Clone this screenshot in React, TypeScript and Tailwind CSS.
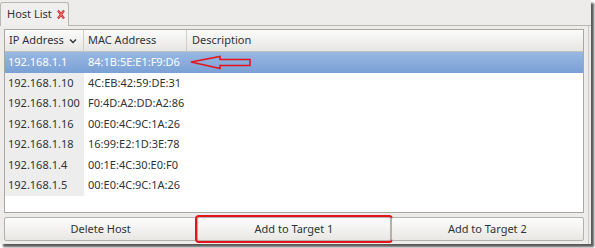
import React from "react";

const hosts = [
  { ip: "192.168.1.1", mac: "84:1B:5E:E1:F9:D6" },
  { ip: "192.168.1.10", mac: "4C:EB:42:59:DE:31" },
  { ip: "192.168.1.100", mac: "F0:4D:A2:DD:A2:86" },
  { ip: "192.168.1.16", mac: "00:E0:4C:9C:1A:26" },
  { ip: "192.168.1.18", mac: "16:99:E2:1D:3E:78" },
  { ip: "192.168.1.4", mac: "00:1E:4C:30:E0:F0" },
  { ip: "192.168.1.5", mac: "00:E0:4C:9C:1A:26" },
];

function CloseIcon() {
  return (
    <svg width="8" height="11" viewBox="0 0 8 11" className="ml-[5px]">
      <path d="M1 1.5 L7 9.5 M7 1.5 L1 9.5" stroke="#d42a2a" strokeWidth="2.2" />
      <path d="M1 1.5 L7 9.5 M7 1.5 L1 9.5" stroke="#f7a3a3" strokeWidth="0.6" />
    </svg>
  );
}

function Arrow() {
  return (
    <svg width="64" height="16" viewBox="0 0 64 16" className="absolute left-[188px] top-[54px]">
      <polygon
        points="3,8 32,2.5 32,5.5 62,5.5 62,11.5 32,11.5 32,14.5"
        fill="none"
        stroke="#e8141b"
        strokeWidth="1.6"
        strokeLinejoin="miter"
      />
    </svg>
  );
}

export default function App() {
  return (
    <div
      className="w-[595px] h-[248px] bg-white relative text-[11px] text-[#2e3436]"
      style={{ fontFamily: '"Noto Sans", "DejaVu Sans", sans-serif' }}
    >
      <div className="w-[591px] h-[244px] bg-[#edeceb] shadow-[3px_3px_2px_rgba(0,0,0,0.65)] flex flex-col">
        <div className="flex h-[26px] items-end">
          <div className="h-[24px] w-[69px] bg-[#f0efee] border border-b-0 border-[#b9b7b2] rounded-t-[3px] flex items-center pl-[6px]">
            <span>Host List</span>
            <CloseIcon />
          </div>
          <div className="flex-1 border-b border-[#b9b7b2]" />
        </div>
        <div className="flex-1 flex flex-col px-[4px] pt-[3px] pb-[2px] border-r border-[#c9c7c2] mr-[2px]">
          <div className="h-[184px] border border-[#a9a7a2] bg-white flex flex-col">
            <div className="h-[22px] flex border-b border-[#c2c0bb] bg-gradient-to-b from-[#fbfbfa] to-[#e7e6e3]">
              <div className="w-[79px] flex items-center justify-between pl-[4px] pr-[6px] border-r border-[#cfcdc8]">
                <span>IP Address</span>
                <svg width="8" height="6" viewBox="0 0 8 6">
                  <path d="M1 1.5 L4 4.5 L7 1.5" fill="none" stroke="#2e3436" strokeWidth="1.4" />
                </svg>
              </div>
              <div className="w-[103px] flex items-center pl-[4px] border-r border-[#cfcdc8]">MAC Address</div>
              <div className="flex-1 flex items-center pl-[5px]">Description</div>
            </div>
            {hosts.map((h, i) => (
              <div
                key={h.ip}
                className={`h-[20.5px] flex items-center ${
                  i === 0 ? "bg-gradient-to-b from-[#98b8e2] to-[#7aa0d5] text-white" : ""
                }`}
              >
                <div className={`w-[79px] h-full flex items-center pl-[3px] ${i === 0 ? "" : "bg-[#ededed]"}`}>
                  {h.ip}
                </div>
                <div className="pl-[4px]">{h.mac}</div>
              </div>
            ))}
          </div>
          <div className="flex mt-[4px] h-[24px]">
            {["Delete Host", "Add to Target 1", "Add to Target 2"].map((b, i) => (
              <div
                key={b}
                className={`flex-1 flex items-center justify-center rounded-[2px] border border-[#b3b1ac] bg-gradient-to-b from-[#fdfdfd] to-[#e8e7e4] ${
                  i === 1 ? "outline-2 outline-[#e3141c] outline-offset-0" : ""
                }`}
              >
                {b}
              </div>
            ))}
          </div>
        </div>
      </div>
      <Arrow />
    </div>
  );
}
